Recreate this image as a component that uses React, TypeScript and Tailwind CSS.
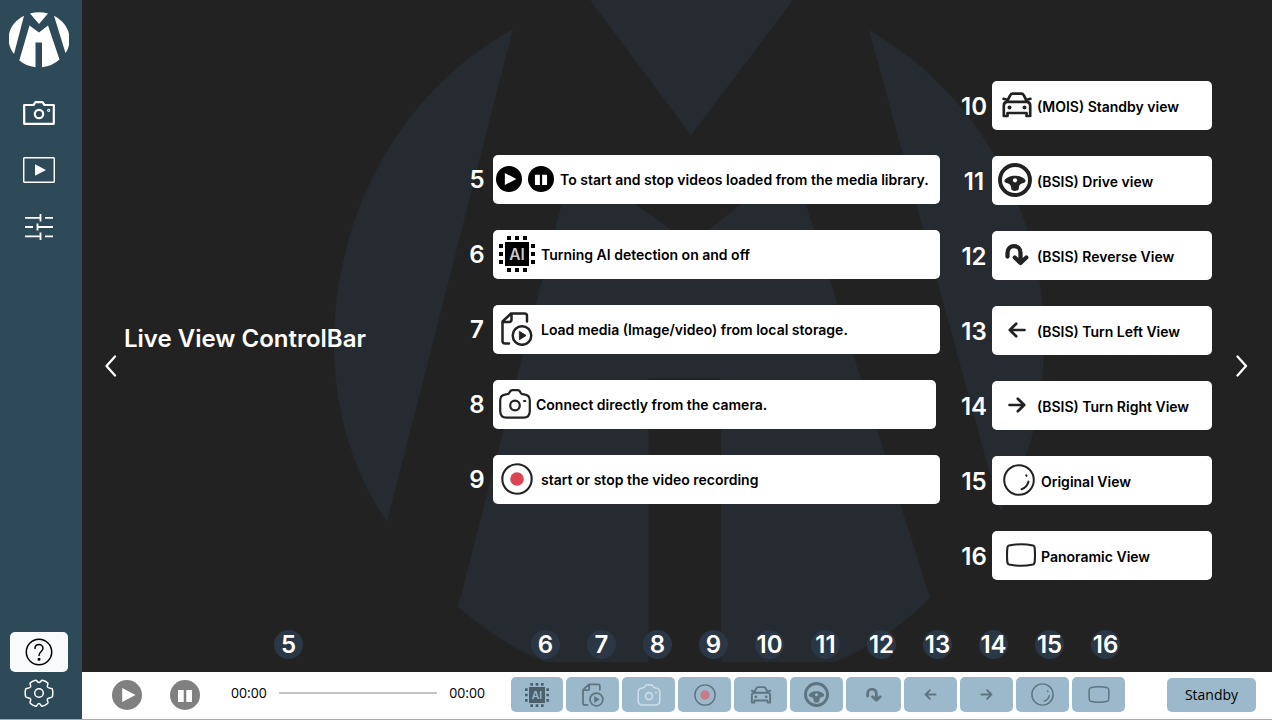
import React from "react";

type IconProps = { className?: string };

const LogoMark = ({ className }: IconProps) => (
  <svg viewBox="0 0 60 56" className={className} fill="currentColor" aria-hidden="true">
    <path d="M21 1.400Q30-1 39 1.400L30 12Z" />
    <path d="M15 3.800C-1 12-5 29 5 42Z" />
    <path d="M45 3.800C61 12 64.500 29 56.500 41Z" />
    <path d="M20.500 13.500 30 20.500 39 13.500 50.500 47.500Q43.500 54 33 55.200V30.500H26.500V55.200Q17 54 10.300 48.500Z" />
  </svg>
);

const Watermark = ({ className }: IconProps) => (
  <svg viewBox="0 0 712 662" className={className} fill="currentColor" aria-hidden="true">
    <path d="M256 0H459L357 135Z" />
    <path d="M179 29C65 92 0 215 0 345C0 411 20 474 53 522Z" />
    <path d="M535 30C643 92 710 210 710 340C710 405 696 462 666 511Z" />
    <path d="M239 160 357 244 459 163 596 598Q554 640 501 662H387V378H314.500V662H211Q164 642 124 607Z" />
  </svg>
);

const SideCamera = () => (
  <svg viewBox="0 0 32 24" className="h-6 w-8" fill="none" stroke="currentColor" strokeWidth="2.200" strokeLinejoin="round" aria-hidden="true">
    <path d="M1.200 4H10.500L12.500 1.200H19.500L21.500 4H30.800V22.800H1.200Z" />
    <circle cx="16" cy="13" r="4.200" />
    <circle cx="25.700" cy="9.300" r=".5" />
  </svg>
);

const SideMedia = () => (
  <svg viewBox="0 0 32 26" className="h-[26px] w-8" fill="none" stroke="currentColor" aria-hidden="true">
    <rect x=".7" y=".7" width="30.600" height="24.600" rx="1" strokeWidth="1.500" />
    <path d="M12 7.300 23 13 12 18.700Z" fill="currentColor" stroke="none" />
  </svg>
);

const SideSliders = () => (
  <svg viewBox="0 0 30 26" className="h-[26px] w-[30px]" fill="none" stroke="currentColor" strokeWidth="1.800" aria-hidden="true">
    <path d="M1 3.800H16M21 3.800H29M1 13H9M14 13H29M1 22.400H16M21 22.400H29M16.500 0V7.500M13.500 9.500V16.500M16.500 18.600V26" />
  </svg>
);

const GearIcon = () => (
  <svg viewBox="0 0 30 30" className="size-[30px]" fill="none" stroke="currentColor" strokeWidth="1.500" strokeLinejoin="round" aria-hidden="true">
    <circle cx="15" cy="15" r="4.300" />
    <path d="M11.500 2.200C9 2.800 7.500 3.600 6.200 5C5.600 5.900 7.200 7.600 6.500 9C5.600 10.700 2.200 9.700 1.700 10.900Q.7 14.500 1.600 18.500C2.200 20.200 5.700 19.300 6.600 21C7.200 22.500 5.500 24.100 6.200 25.200Q8.500 27.400 11.800 28.200C13.200 28.200 13.200 25.600 15 25.600C16.800 25.600 16.800 28.200 18.200 28.200Q21.500 27.400 23.800 25.200C24.500 24.100 22.800 22.500 23.400 21C24.300 19.300 27.800 20.200 28.400 18.500Q29.300 14.500 28.300 10.900C27.800 9.700 24.400 10.700 23.500 9C22.800 7.600 24.400 5.900 23.800 5Q21.500 2.800 18.500 2.200C17 1.800 16.800 4.600 15 4.600C13.200 4.600 13 1.800 11.500 2.200Z" />
  </svg>
);

const HelpIcon = () => (
  <svg viewBox="0 0 28 28" className="size-7" fill="none" stroke="currentColor" strokeWidth="1.500" strokeLinecap="round" aria-hidden="true">
    <circle cx="14" cy="14" r="12.700" />
    <path d="M10 10.500C10 5.300 18 5.300 18 10.300C18 13.500 14 13.500 14 17.500" />
    <circle cx="14" cy="21.200" r=".8" fill="currentColor" />
  </svg>
);

const PlayDisc = ({ className }: IconProps) => (
  <svg viewBox="0 0 30 30" className={className} aria-hidden="true">
    <circle cx="15" cy="15" r="15" fill="currentColor" />
    <path d="M10.200 8 23.500 15 10.200 22Z" fill="#fff" />
  </svg>
);

const PauseDisc = ({ className }: IconProps) => (
  <svg viewBox="0 0 30 30" className={className} aria-hidden="true">
    <circle cx="15" cy="15" r="15" fill="currentColor" />
    <path d="M8 10H13.700V22H8ZM16.300 10H22V22H16.300Z" fill="#fff" />
  </svg>
);

const ChipIcon = ({ className }: IconProps) => (
  <svg viewBox="0 0 36 36" className={className} fill="currentColor" aria-hidden="true">
    <path d="M6 6H30V30H6ZM8 0h4v4H8zM16 0h4v4h-4zM24 0h4v4h-4zM8 32h4v4H8zM16 32h4v4h-4zM24 32h4v4h-4zM0 8h4v4H0zM0 16h4v4H0zM0 24h4v4H0zM32 8h4v4h-4zM32 16h4v4h-4zM32 24h4v4h-4z" />
    <text x="18" y="23.500" textAnchor="middle" fontSize="15.500" className="font-['Inter',sans-serif] font-semibold">AI</text>
  </svg>
);

const FilePlayIcon = ({ className }: IconProps) => (
  <svg viewBox="0 0 32 34" className={className} fill="none" stroke="currentColor" strokeWidth="2.500" strokeLinecap="round" strokeLinejoin="round" aria-hidden="true">
    <path d="M8 31.500H4Q1.500 31.500 1.500 29V9.500L10 1.500H23.500Q26 1.500 26 4V9.500M1.500 10H8Q10.500 10 10.500 7.500V1.500" />
    <circle cx="21" cy="23.500" r="9.300" />
    <path d="M18.700 19.600 25 23.500 18.700 27.400Z" fill="currentColor" strokeWidth="1" />
  </svg>
);

const CameraIcon = ({ className }: IconProps) => (
  <svg viewBox="0 0 32 30" className={className} fill="none" stroke="currentColor" strokeWidth="2.200" strokeLinecap="round" strokeLinejoin="round" aria-hidden="true">
    <path d="M10.500 3.500C11.200 1.700 12 1.200 13.500 1.200H18.500C20 1.200 20.800 1.700 21.500 3.500C22 4.900 23 5.300 25 5.400C29 5.700 30.800 7.500 30.800 11.500V22C30.800 26.500 28.500 28.600 24.500 28.600H7.500C3.500 28.600 1.200 26.500 1.200 22V11.500C1.200 7.500 3 5.700 7 5.400C9 5.300 10 4.900 10.500 3.500Z" />
    <circle cx="16" cy="16.500" r="4.800" />
    <path d="M25 12H26.200" />
  </svg>
);

const RecordIcon = ({ className }: IconProps) => (
  <svg viewBox="0 0 32 32" className={className} aria-hidden="true">
    <circle cx="16" cy="16" r="14.700" fill="none" stroke="currentColor" strokeWidth="2.100" />
    <circle cx="16" cy="16" r="6.800" fill="#dc4452" />
  </svg>
);

const CarIcon = ({ className }: IconProps) => (
  <svg viewBox="0 0 30 26" className={className} fill="none" stroke="currentColor" strokeWidth="2.700" strokeLinecap="round" strokeLinejoin="round" aria-hidden="true">
    <path d="M5 9.500 8.300 3.200Q9 1.600 10.800 1.600H19.200Q21 1.600 21.700 3.200L25 9.500M5 9.800H25Q28.200 10.300 28.200 13.500V24H24.500V21H5.500V24H1.800V13.500Q1.800 10.300 5 9.800ZM1.600 6.800 4.800 7.800M28.400 6.800 25.200 7.800" />
    <circle cx="7.500" cy="15.600" r="2" fill="currentColor" stroke="none" />
    <circle cx="22.500" cy="15.600" r="2" fill="currentColor" stroke="none" />
  </svg>
);

const WheelIcon = ({ className }: IconProps) => (
  <svg viewBox="0 0 34 34" className={className} aria-hidden="true">
    <circle cx="17" cy="17" r="15" fill="none" stroke="currentColor" strokeWidth="3.900" />
    <path d="M6.500 17.600C7 15.500 11 12.700 17 12.700C23 12.700 27 15.500 27.500 17.600C27.800 19.400 26 20 24.500 20.300C21.800 20.900 20.900 22.500 20.800 25.500C20.700 27.300 19 27.900 17 27.900C15 27.900 13.300 27.300 13.200 25.500C13.100 22.500 12.200 20.900 9.500 20.300C8 20 6.200 19.400 6.500 17.600Z" fill="currentColor" />
    <circle cx="17" cy="17.300" r="2.100" fill="#fff" />
  </svg>
);

const ReverseIcon = ({ className }: IconProps) => (
  <svg viewBox="0 0 26 24" className={className} fill="none" stroke="currentColor" strokeWidth="4.300" strokeLinecap="round" strokeLinejoin="round" aria-hidden="true">
    <path d="M3.500 13.500V10C3.500 .8 16.500 .8 16.500 10V19M10.800 14.500 16.500 20 22.300 14.500" />
  </svg>
);

const ArrowLeftIcon = ({ className }: IconProps) => (
  <svg viewBox="0 0 18 16" className={className} fill="none" stroke="currentColor" strokeWidth="2.700" strokeLinecap="round" strokeLinejoin="round" aria-hidden="true">
    <path d="M16.500 8H1.800M8.200 1.700 1.800 8 8.200 14.300" />
  </svg>
);

const ArrowRightIcon = ({ className }: IconProps) => (
  <svg viewBox="0 0 18 16" className={className} fill="none" stroke="currentColor" strokeWidth="2.700" strokeLinecap="round" strokeLinejoin="round" aria-hidden="true">
    <path d="M1.500 8H16.200M9.800 1.700 16.200 8 9.800 14.300" />
  </svg>
);

const LensIcon = ({ className }: IconProps) => (
  <svg viewBox="0 0 32 32" className={className} fill="none" stroke="currentColor" strokeWidth="2" strokeLinecap="round" aria-hidden="true">
    <circle cx="16" cy="16" r="14.800" />
    <path d="M25.500 17.500Q24 23.500 18.500 25.200M23.200 11.300 23.500 11.800" />
  </svg>
);

const PanoramaIcon = ({ className }: IconProps) => (
  <svg viewBox="0 0 30 24" className={className} fill="none" stroke="currentColor" strokeWidth="2.100" strokeLinejoin="round" aria-hidden="true">
    <path d="M3 2.600Q15-.2 27 2.600Q28.400 3 28.600 4.500Q29.400 12 28.600 19.500Q28.400 21 27 21.400Q15 24.200 3 21.400Q1.600 21 1.400 19.500Q.6 12 1.400 4.500Q1.600 3 3 2.600Z" />
  </svg>
);

const Chevron = ({ d }: { d: string }) => (
  <svg viewBox="0 0 12 22" className="h-[22px] w-3" fill="none" stroke="currentColor" strokeWidth="2.300" strokeLinecap="round" strokeLinejoin="round" aria-hidden="true">
    <path d={d} />
  </svg>
);

type Row = { n: number; text: string; icon: React.ReactNode; slot: string; card: string };

const mediaRows: Row[] = [
  {
    n: 5,
    text: "To start and stop videos loaded from the media library.",
    icon: (
      <>
        <PlayDisc className="size-[26px]" />
        <PauseDisc className="size-[26px]" />
      </>
    ),
    slot: "w-[67px] gap-[6px] pr-[3px] text-black",
    card: "w-[447px]",
  },
  { n: 6, text: "Turning AI detection on and off", icon: <ChipIcon className="size-9 [&>text]:fill-[#c4c8ca]" />, slot: "w-12 text-black", card: "w-[447px]" },
  { n: 7, text: "Load media (Image/video) from local storage.", icon: <FilePlayIcon className="h-[34px] w-8" />, slot: "w-12", card: "w-[447px]" },
  { n: 8, text: "Connect directly from the camera.", icon: <CameraIcon className="h-[30px] w-8" />, slot: "w-[43px]", card: "w-[443px]" },
  { n: 9, text: "start or stop the video recording", icon: <RecordIcon className="size-8" />, slot: "w-12", card: "w-[447px]" },
];

const viewRows: Row[] = [
  { n: 10, text: "(MOIS) Standby view", icon: <CarIcon className="h-[26px] w-[30px]" />, slot: "w-[41px]", card: "w-[220px] pl-1" },
  { n: 11, text: "(BSIS) Drive view", icon: <WheelIcon className="size-[34px]" />, slot: "w-[41px] pr-[3px]", card: "w-[220px] pl-1" },
  { n: 12, text: "(BSIS) Reverse View", icon: <ReverseIcon className="h-6 w-[26px]" />, slot: "w-[41px]", card: "w-[220px] pl-1" },
  { n: 13, text: "(BSIS) Turn Left View", icon: <ArrowLeftIcon className="h-4 w-[18px]" />, slot: "w-[41px]", card: "w-[220px] pl-1" },
  { n: 14, text: "(BSIS) Turn Right View", icon: <ArrowRightIcon className="h-4 w-[18px]" />, slot: "w-[41px]", card: "w-[220px] pl-1" },
  { n: 15, text: "Original View", icon: <LensIcon className="size-8" />, slot: "w-[41px] pr-[3px]", card: "w-[220px] pl-2" },
  { n: 16, text: "Panoramic View", icon: <PanoramaIcon className="h-6 w-[30px]" />, slot: "w-[41px]", card: "w-[220px] pl-2" },
];

const tools = [
  { label: "AI detection", icon: <ChipIcon className="size-6 [&>text]:fill-[#9bb9cb]" />, look: "w-[52px] text-[#4c606b]" },
  { label: "Load media", icon: <FilePlayIcon className="h-6 w-[22px]" />, look: "w-[53px] text-[#5e747f]" },
  { label: "Connect camera", icon: <CameraIcon className="h-[22px] w-6" />, look: "w-[53px] text-[#cbdde6]" },
  { label: "Record", icon: <RecordIcon className="size-[22px] [&>circle:last-child]:fill-[#c67b8b]" />, look: "w-[53px] text-[#5e747f]" },
  { label: "Standby view", icon: <CarIcon className="h-[18px] w-[22px]" />, look: "w-[53px] text-[#5e747f]" },
  { label: "Drive view", icon: <WheelIcon className="size-[25px] [&>circle:last-child]:fill-[#9bb9cb]" />, look: "w-[53px] text-[#5e747f]" },
  { label: "Reverse view", icon: <ReverseIcon className="h-4 w-[18px]" />, look: "w-[55px] text-[#5e747f]" },
  { label: "Turn left view", icon: <ArrowLeftIcon className="h-[11px] w-[13px]" />, look: "w-[53px] text-[#5e747f]" },
  { label: "Turn right view", icon: <ArrowRightIcon className="h-[11px] w-[13px]" />, look: "w-[53px] text-[#5e747f]" },
  { label: "Original view", icon: <LensIcon className="size-[23px]" />, look: "w-[53px] text-[#5e747f]" },
  { label: "Panoramic view", icon: <PanoramaIcon className="h-[17px] w-[22px]" />, look: "w-[53px] text-[#5e747f]" },
];

const Legend = ({ rows, gap, inset }: { rows: Row[]; gap: string; inset: string }) => (
  <ol className="flex flex-col gap-[26px]">
    {rows.map((r) => (
      <li key={r.n} className={`flex items-center ${gap}`}>
        <span className={`flex w-7 justify-center text-2xl font-semibold text-white ${inset}`}>{r.n}</span>
        <div className={`flex h-[49px] items-center rounded-[5px] bg-white text-[#222] ${r.card}`}>
          <span className={`flex shrink-0 items-center justify-center ${r.slot}`}>{r.icon}</span>
          <span className={`text-sm font-semibold whitespace-nowrap text-black ${inset}`}>{r.text}</span>
        </div>
      </li>
    ))}
  </ol>
);

const Badge = ({ n }: { n: number }) => (
  <span className="flex size-[29px] items-center justify-center rounded-full bg-[#2b3745] text-2xl font-semibold text-white">{n}</span>
);

export default function App() {
  return (
    <div className="flex min-h-screen border-b border-[#aaa] bg-[#222] font-['Inter',sans-serif]">
      <nav aria-label="Main" className="flex w-[82px] shrink-0 flex-col items-center bg-[#2e4a58] pt-3 pr-1 pb-[11px] text-white">
        <LogoMark className="h-14 w-[60px]" />
        <button aria-label="Camera" className="mt-[33px]"><SideCamera /></button>
        <button aria-label="Media library" className="mt-8"><SideMedia /></button>
        <button aria-label="Adjustments" className="mt-[31px]"><SideSliders /></button>
        <button aria-label="Help" className="mt-auto flex h-10 w-[58px] items-center justify-center rounded-[5px] bg-[#f8fafc] text-black"><HelpIcon /></button>
        <button aria-label="Settings" className="mt-[6px]"><GearIcon /></button>
      </nav>

      <div className="flex min-w-0 flex-1 flex-col">
        <main className="relative isolate flex flex-1 flex-col overflow-hidden">
          <Watermark className="absolute top-0 left-[252px] -z-10 h-[662px] w-[712px] text-[#262b32]" />
          <div className="flex flex-1 items-center pt-[30px] pr-6 pl-[23px]">
            <button aria-label="Previous" className="mt-[72px] text-white"><Chevron d="M10 1.500 1.500 11 10 20.500" /></button>
            <h1 className="mt-[18px] ml-[7px] flex-1 text-2xl font-semibold whitespace-nowrap text-white">Live View ControlBar</h1>
            <div className="mb-[2px]">
              <Legend rows={mediaRows} gap="gap-[2px]" inset="pt-[2px]" />
            </div>
            <div className="ml-5">
              <Legend rows={viewRows} gap="gap-1" inset="pt-[3px]" />
            </div>
            <button aria-label="Next" className="mt-[72px] ml-6 text-white"><Chevron d="M1.500 1.500 10 11 1.500 20.500" /></button>
          </div>
          <div className="flex pr-[152px] pb-[13px] pl-[192px]">
            <Badge n={5} />
            <div className="ml-auto flex gap-[27px]">
              {[...mediaRows.slice(1), ...viewRows].map((r) => (
                <Badge key={r.n} n={r.n} />
              ))}
            </div>
          </div>
        </main>

        <footer className="flex h-[47px] items-center bg-white pr-4 pb-[2px] pl-[30px] font-['Open_Sans',sans-serif] text-sm text-black">
          <button aria-label="Play" className="text-[#808080]"><PlayDisc className="size-[30px]" /></button>
          <button aria-label="Pause" className="ml-7 text-[#808080]"><PauseDisc className="size-[30px]" /></button>
          <div className="ml-[31px] flex min-w-0 flex-1 items-center pb-1">
            <span>00:00</span>
            <input
              type="range"
              aria-label="Seek"
              defaultValue={0}
              className="mx-3 h-[2px] min-w-0 flex-1 appearance-none bg-[#c4c4c4] [&::-webkit-slider-thumb]:size-0 [&::-webkit-slider-thumb]:appearance-none"
            />
            <span>00:00</span>
          </div>
          <div className="ml-[26px] flex gap-[3px]">
            {tools.map((t) => (
              <button
                key={t.label}
                aria-label={t.label}
                className={`flex h-[35px] items-center justify-center rounded-[5px] bg-[#9bb9cb] ${t.look}`}
              >
                {t.icon}
              </button>
            ))}
          </div>
          <button className="ml-[42px] h-[34px] w-[89px] rounded-[5px] bg-[#9bb9cb]">Standby</button>
        </footer>
      </div>
    </div>
  );
}
